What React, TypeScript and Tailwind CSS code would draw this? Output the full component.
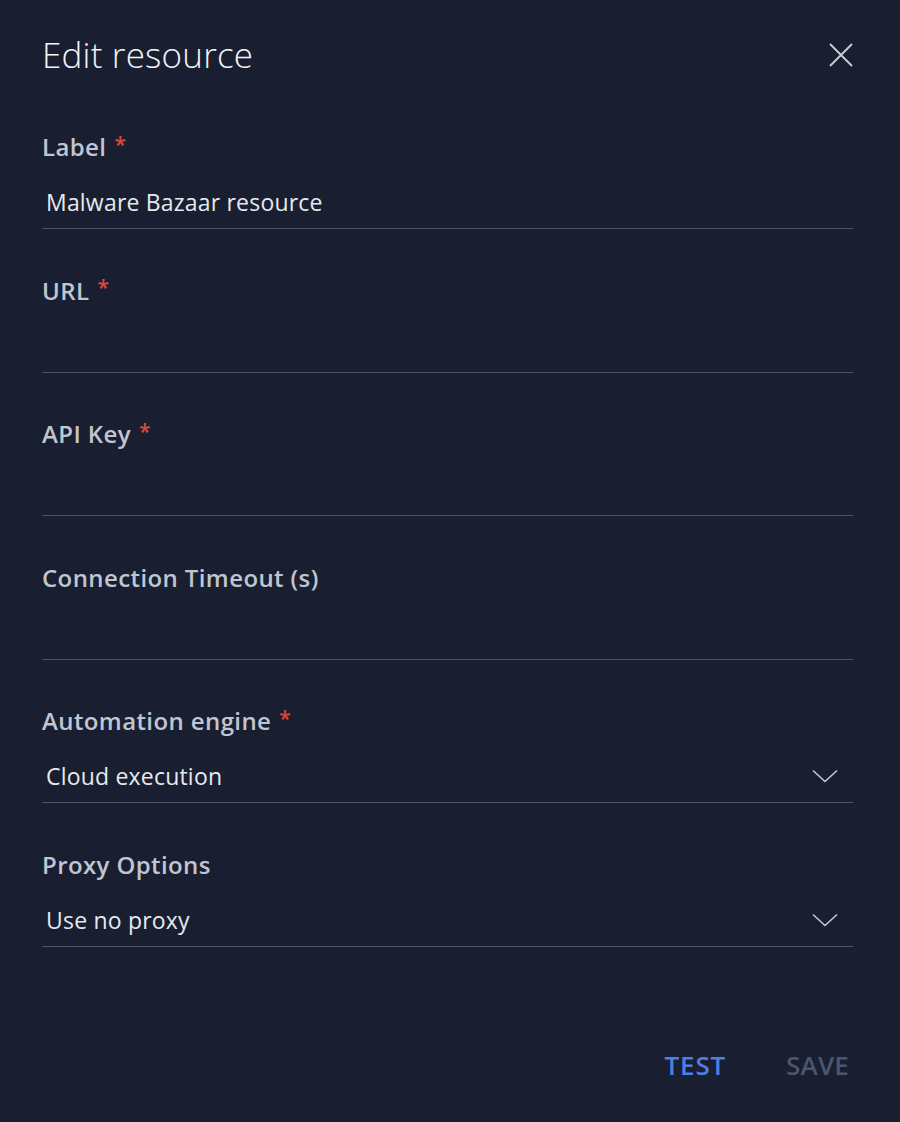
import React from 'react';

interface FieldProps {
  label: string;
  required?: boolean;
  value?: string;
  select?: boolean;
}

const Chevron = () => (
  <svg width="26" height="14" viewBox="0 0 26 14" fill="none" className="mr-[15px]">
    <path d="M1 1.5 L13 12.5 L25 1.5" stroke="#c3c8d2" strokeWidth="1.6" />
  </svg>
);

const Field: React.FC<FieldProps> = ({ label, required, value, select }) => (
  <div className="flex flex-col">
    <div className="h-[28px] pb-[2px] flex items-center text-[24px] font-semibold tracking-[0.4px] text-[#c0c6d1] leading-[28px]">
      {label}
      {required && <span className="ml-[8px] text-[#d9493a] text-[21px] leading-none -mt-[6px]">*</span>}
    </div>
    <div className="h-[67px] pt-[26px] pb-[12px] pl-[4px] flex items-center justify-between border-b border-[#4a5570]">
      <span className="text-[23px] tracking-[0.2px] leading-[28px] text-[#e6e9ef]">{value}</span>
      {select && <Chevron />}
    </div>
  </div>
);

export default function App() {
  return (
    <div
      className="w-[900px] h-[1122px] bg-[#191f30] pl-[42px] pr-[47px] pt-[35px] flex flex-col"
      style={{ fontFamily: '"Open Sans", "Liberation Sans", sans-serif' }}
    >
      <div className="h-[40px] flex items-center justify-between">
        <h1 className="text-[35px] font-light text-[#f2f4f7] leading-[40px] tracking-[0.2px]">Edit resource</h1>
        <svg width="24" height="24" viewBox="0 0 24 24" className="ml-auto">
          <path d="M1 1 L23 23 M23 1 L1 23" stroke="#c9ced8" strokeWidth="1.8" />
        </svg>
      </div>
      <div className="mt-[59px] flex flex-col gap-[48.6px]">
        <Field label="Label" required value="Malware Bazaar resource" />
        <Field label="URL" required />
        <Field label="API Key" required />
        <Field label="Connection Timeout (s)" />
        <Field label="Automation engine" required value="Cloud execution" select />
        <Field label="Proxy Options" value="Use no proxy" select />
      </div>
      <div className="mt-[104px] flex justify-end items-center gap-[52px]">
        <button className="px-[4px] text-[26px] font-semibold tracking-[0.8px] text-[#4f7fe3] leading-[28px]">TEST</button>
        <button className="px-[4px] text-[26px] font-semibold tracking-[0.2px] text-[#4b566d] leading-[28px]">SAVE</button>
      </div>
    </div>
  );
}
